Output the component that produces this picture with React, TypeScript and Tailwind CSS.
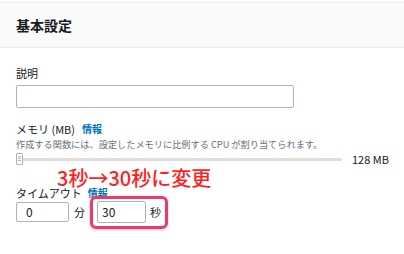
import React from "react";

export default function App() {
  const font = { fontFamily: '"Noto Sans CJK JP", "Noto Sans", sans-serif' };
  return (
    <div className="relative w-[404px] h-[254px] bg-white overflow-hidden text-[#16191f]" style={font}>
      <div className="mt-[2px] h-[46px] border-t border-b border-[#eaeded] bg-[#fafafa] flex items-center px-4">
        <span className="text-[14px] font-bold leading-none">基本設定</span>
      </div>
      <div className="px-4 flex flex-col">
        <div className="mt-[17px] text-[11px] leading-[16px]">説明</div>
        <div className="mt-[4px] w-[278px] h-[23px] border border-[#aab7b8] rounded-[2px] bg-white" />
        <div className="mt-[13px] flex items-center gap-[7px] text-[11px] leading-[16px]">
          <span>メモリ (MB)</span>
          <span className="text-[#0073bb] font-bold text-[10px]">情報</span>
        </div>
        <div className="mt-[-1px] text-[9.2px] leading-[16px] text-[#687078] whitespace-nowrap">
          作成する関数には、設定したメモリに比例する CPU が割り当てられます。
        </div>
        <div className="mt-[1px] flex items-center h-[12px]">
          <div className="relative w-[326px] shrink-0 h-[3px] bg-[#e2ddd8] rounded-full">
            <div className="absolute left-0 top-[-5px] w-[7px] h-[12px] bg-white border border-[#aab7b8] rounded-[1px] flex flex-col items-center justify-center gap-[1px]">
              <div className="w-[3px] h-px bg-[#aab7b8]" />
              <div className="w-[3px] h-px bg-[#aab7b8]" />
              <div className="w-[3px] h-px bg-[#aab7b8]" />
            </div>
          </div>
          <span className="ml-[10px] text-[11px] leading-none whitespace-nowrap shrink-0">128 MB</span>
        </div>
        <div className="mt-[20px] flex items-center gap-[6px] text-[11px] leading-[16px]">
          <span>タイムアウト</span>
          <span className="text-[#0073bb] font-bold text-[10px]">情報</span>
        </div>
        <div className="mt-[0px] flex items-center text-[12px]">
          <div className="w-[53px] h-[20px] border border-[#aab7b8] rounded-[2px] flex items-center pl-[9px]">0</div>
          <span className="ml-[5px] text-[11px]">分</span>
          <div className="ml-[12px] w-[49px] h-[22px] border border-[#aab7b8] rounded-[2px] flex items-center pl-[4px]">30</div>
          <span className="ml-[4px] text-[11px]">秒</span>
        </div>
      </div>
      <div className="absolute left-[90px] top-[196px] w-[78px] h-[33px] border-[3px] border-[#ec3a6e] rounded-[6px] shadow-[0_1px_3px_rgba(0,0,0,0.25)]" />
      <div
        className="absolute left-[57px] top-[165px] text-[20px] leading-[26px] font-medium text-[#ff1f1f] whitespace-nowrap"
        style={{ textShadow: "0 0 2px #fff, 1px 1px 0 #fff, -1px -1px 0 #fff, 1px -1px 0 #fff, -1px 1px 0 #fff" }}
      >
        3秒→30秒に変更
      </div>
    </div>
  );
}
